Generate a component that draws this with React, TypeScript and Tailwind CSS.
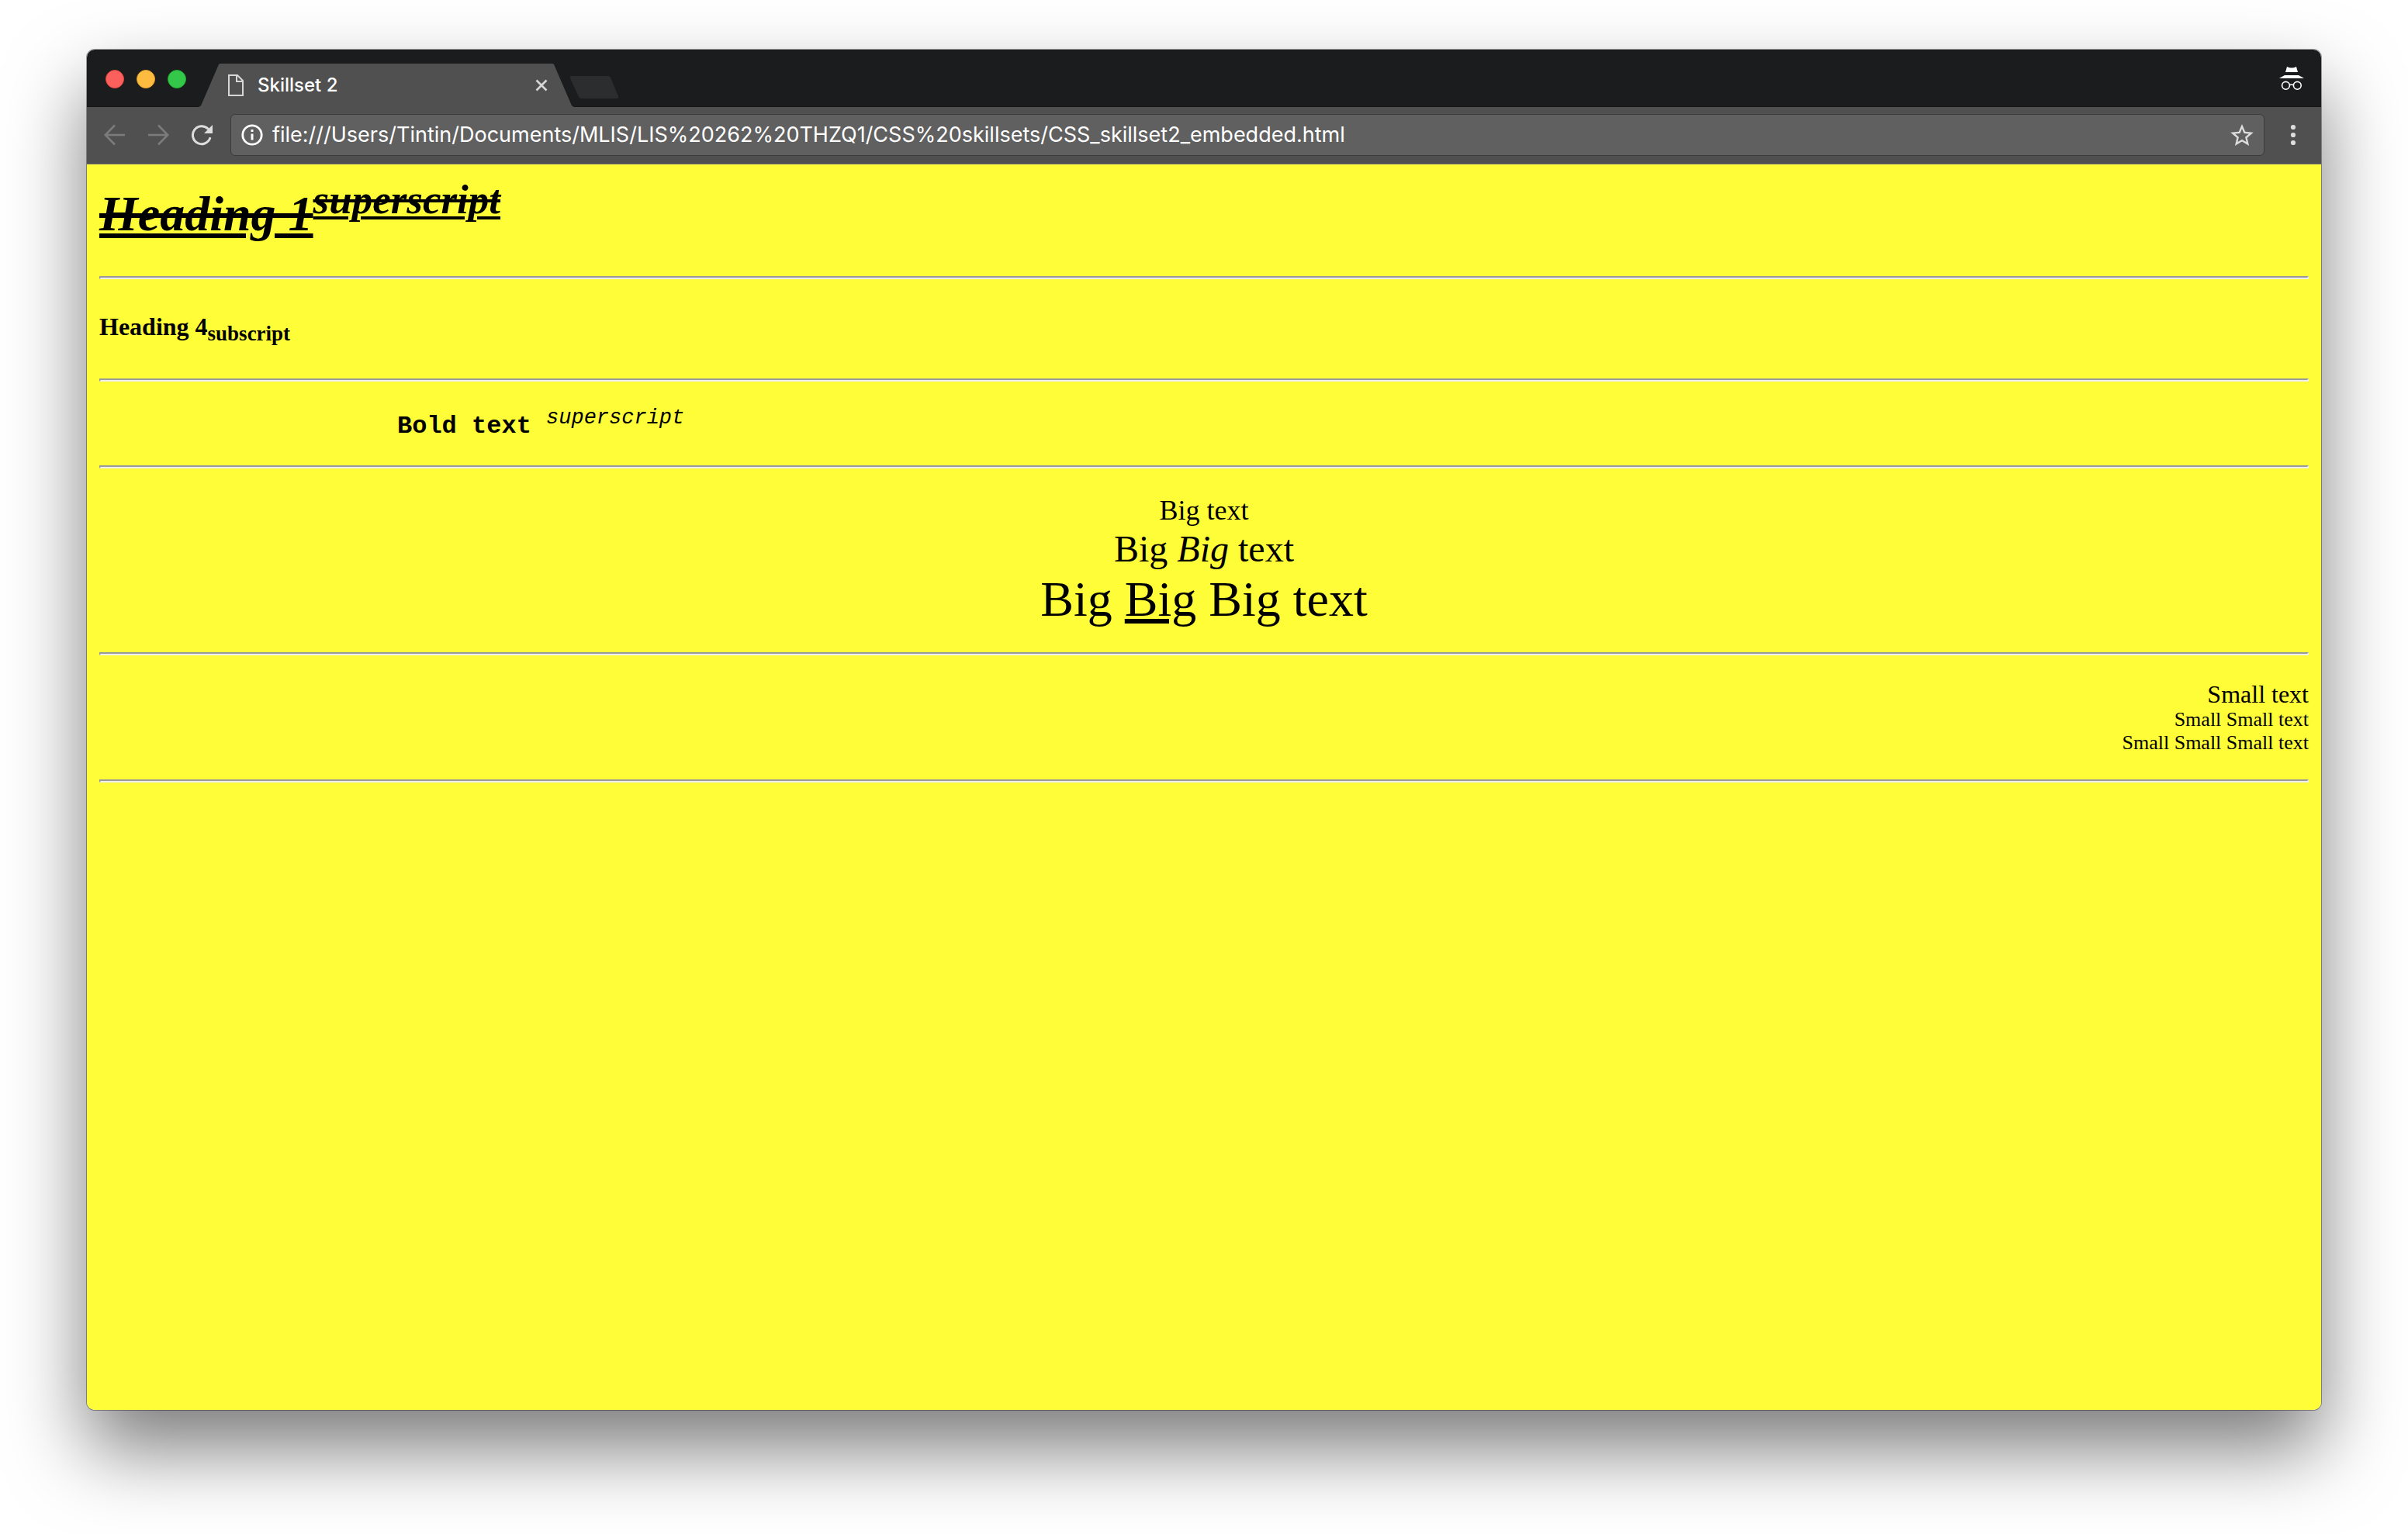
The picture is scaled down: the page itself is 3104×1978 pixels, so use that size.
import type { ReactNode } from "react";

function NavButton({ label, className, children }: { label: string; className: string; children: ReactNode }) {
  return (
    <button type="button" aria-label={label} className={className}>
      <svg viewBox="0 0 32 32" className="size-8" fill="none">
        {children}
      </svg>
    </button>
  );
}

function Rule() {
  return <hr className="h-1 border-2 border-t-[#9a9a9a] border-l-[#9a9a9a] border-r-[#eeeeee] border-b-[#eeeeee]" />;
}

function TabStrip() {
  return (
    <header className="flex h-[74px] items-end border-b border-[#141515] bg-[#1b1c1d]">
      <div className="flex gap-4 self-center pt-0.5 pl-6">
        <button type="button" aria-label="Close window" className="size-6 rounded-full border border-[#e2463f] bg-[#fc605c]" />
        <button type="button" aria-label="Minimize window" className="size-6 rounded-full border border-[#e0a030] bg-[#fdbc40]" />
        <button type="button" aria-label="Zoom window" className="size-6 rounded-full border border-[#1faa2f] bg-[#34c84a]" />
      </div>
      <div className="-mb-px ml-4 flex h-14 w-[484px] items-center bg-[#505050] pr-[34px] pl-[38px] [clip-path:polygon(0_100%,3px_97%,26px_2%,28px_0,456px_0,458px_2%,481px_97%,100%_100%)]">
        <svg viewBox="0 0 20 28" className="h-7 w-5" fill="none" stroke="#d6d6d6" strokeWidth="2">
          <path d="M1 1h11l7 7v19H1z" />
          <path d="M11 1v8h8" />
        </svg>
        <span className="ml-[18px] flex-1 text-2xl font-medium text-white">Skillset 2</span>
        <button type="button" aria-label="Close tab">
          <svg viewBox="0 0 16 16" className="size-4" stroke="#d6d6d6" strokeWidth="2.6">
            <path d="M1.5 1.5l13 13M14.5 1.5l-13 13" />
          </svg>
        </button>
      </div>
      <button type="button" aria-label="New tab" className="-ml-1.5 mb-2.5">
        <svg viewBox="0 0 64 29" className="h-[29px] w-16">
          <path d="M3 0h46q3 0 4 2l10 24q1 3-2 3H16q-3 0-4-2L1 3Q0 0 3 0z" fill="#2c2d2f" />
        </svg>
      </button>
      <svg viewBox="0 0 32 30" className="mr-[22px] ml-auto h-[30px] w-8 self-center" role="img" aria-label="Incognito">
        <path d="M10 0q6 3 12 0l2 7H8z" fill="#fff" />
        <path d="M7 11h18l7 4H0z" fill="#fff" />
        <g fill="none" stroke="#fff" strokeWidth="1.6">
          <circle cx="8.5" cy="24.3" r="4.9" />
          <circle cx="23.3" cy="24.3" r="4.9" />
          <path d="M13.4 23.6q2.5-1.2 5 0" />
        </g>
      </svg>
    </header>
  );
}

function Toolbar() {
  return (
    <nav className="flex h-[74px] items-center border-b border-[#6d6d6d] bg-[#505050] px-5 pb-px">
      <div className="flex gap-6">
        <NavButton label="Back" className="text-[#7b7b7b]">
          <path d="M29 16H4M16 3.5L3.8 16 16 28.5" stroke="currentColor" strokeWidth="2.6" />
        </NavButton>
        <NavButton label="Forward" className="text-[#7b7b7b]">
          <path d="M3 16h25M16 3.5L28.2 16 16 28.5" stroke="currentColor" strokeWidth="2.6" />
        </NavButton>
        <NavButton label="Reload" className="text-[#dddddd]">
          <path d="M26.7 20.3A11.5 11.5 0 1 1 24 8" stroke="currentColor" strokeWidth="3" strokeLinecap="round" />
          <path d="M30 3v11H19z" fill="currentColor" />
        </NavButton>
      </div>
      <form className="mx-[21px] flex h-[54px] flex-1 items-center gap-3 rounded-md border border-[#3b3b3b] bg-[#606060] px-[13px]">
        <svg viewBox="0 0 28 28" className="size-7" fill="none">
          <circle cx="14" cy="14" r="12.2" stroke="#fff" strokeWidth="2.8" />
          <path d="M14 12.5v8M14 7v3" stroke="#fff" strokeWidth="3" />
        </svg>
        <input
          aria-label="Address"
          type="text"
          defaultValue="file:///Users/Tintin/Documents/MLIS/LIS%20262%20THZQ1/CSS%20skillsets/CSS_skillset2_embedded.html"
          className="min-w-0 flex-1 bg-transparent text-[27px] leading-9 text-white outline-none"
        />
        <button type="button" aria-label="Bookmark this page">
          <svg viewBox="2 2 20 19" className="h-7 w-[30px]" fill="#dddddd">
            <path d="M22 9.24l-7.19-.62L12 2 9.19 8.63 2 9.24l5.46 4.73L5.82 21 12 17.27 18.18 21l-1.63-7.03L22 9.24zM12 15.4l-3.76 2.27 1-4.28-3.32-2.88 4.38-.38L12 6.1l1.71 4.04 4.38.38-3.32 2.88 1 4.28L12 15.4z" />
          </svg>
        </button>
      </form>
      <NavButton label="Menu" className="text-[#dddddd]">
        <g fill="currentColor">
          <circle cx="16" cy="6" r="3.1" />
          <circle cx="16" cy="16" r="3.1" />
          <circle cx="16" cy="26" r="3.1" />
        </g>
      </NavButton>
    </nav>
  );
}

function Page() {
  return (
    <main className="flex-1 bg-[#fffd38] px-4 pt-[27px] font-['Liberation_Serif',serif] text-black">
      <h1 className="mb-[43px] text-[64px] leading-[74px] font-bold italic">
        <span className="[text-decoration-line:underline_line-through] decoration-[6px] underline-offset-[4px]">Heading 1</span>
        <sup className="top-0 align-super text-[53px] leading-[0] [text-decoration-line:underline_line-through] decoration-4 underline-offset-[4px]">
          superscript
        </sup>
      </h1>
      <Rule />
      <h4 className="mt-10 mb-[46px] text-[32px] leading-[42px] font-bold">
        Heading 4<sub className="bottom-0 align-sub text-[27px] leading-[0]">subscript</sub>
      </h4>
      <Rule />
      <p className="mt-[38px] mb-[30px] ml-96 font-['Liberation_Mono',monospace] text-[32px] leading-10">
        <b>Bold text</b> <sup className="top-0 align-super text-[27px] leading-[0] italic">superscript</sup>
      </p>
      <Rule />
      <div className="mt-[33px] mb-[33px] text-center">
        <p className="text-4xl leading-[42px]">Big text</p>
        <p className="text-5xl leading-[58px]">
          Big <i>Big</i> text
        </p>
        <p className="text-[64px] leading-[71px]">
          Big <u className="decoration-[6px] underline-offset-[4px]">Big</u> Big text
        </p>
      </div>
      <Rule />
      <div className="my-8 text-right text-[26px] leading-[30px]">
        <p className="text-[32px] leading-9">Small text</p>
        <p>Small Small text</p>
        <p>Small Small Small text</p>
      </div>
      <Rule />
    </main>
  );
}

export default function App() {
  return (
    <div className="flex min-h-screen flex-col bg-white px-28 pt-16 pb-40 font-[Inter,sans-serif]">
      <div className="flex flex-1 flex-col rounded-[10px] shadow-[0_0_0_1px_rgba(0,0,0,0.35),0_50px_100px_rgba(0,0,0,0.52)]">
        <div className="flex flex-1 flex-col overflow-hidden rounded-[10px]">
          <TabStrip />
          <Toolbar />
          <Page />
        </div>
      </div>
    </div>
  );
}
